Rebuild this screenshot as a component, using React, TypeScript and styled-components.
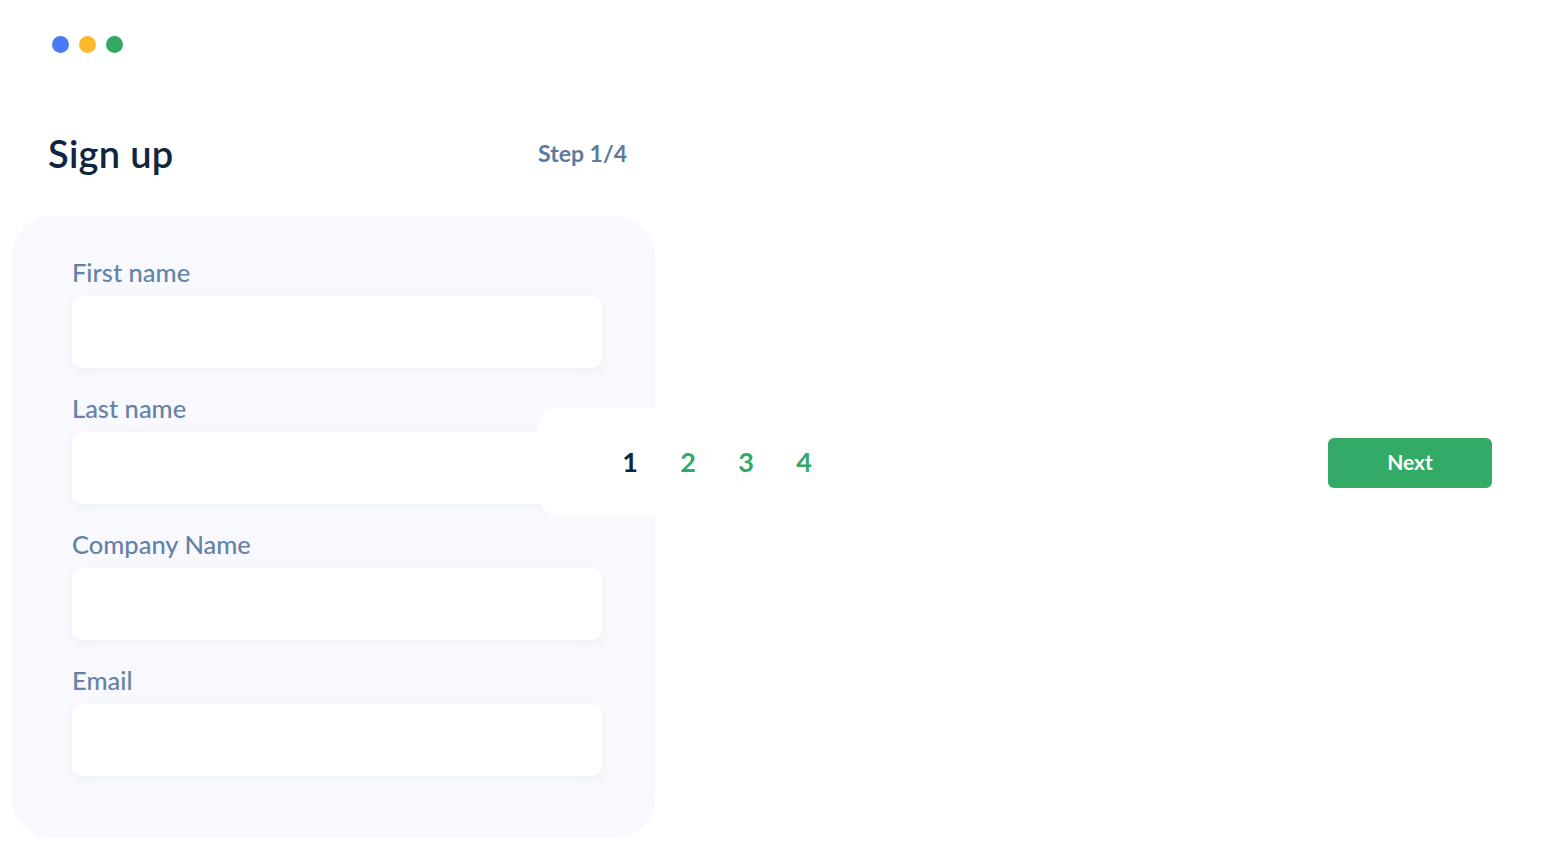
import React from 'react';
import styled, { createGlobalStyle } from 'styled-components';

const GlobalStyle = createGlobalStyle`
  html, body {
    margin: 0;
    padding: 0;
    background: #ffffff;
    font-family: Lato, 'Noto Sans', 'Liberation Sans', sans-serif;
  }
`;

const Page = styled.div`
  position: relative;
  width: 1544px;
  height: 850px;
  overflow: hidden;
  background: #ffffff;
`;

const Dots = styled.div`
  display: flex;
  gap: 10px;
  padding: 36px 0 0 52px;
`;

const Dot = styled.span<{ color: string }>`
  width: 17px;
  height: 17px;
  border-radius: 50%;
  background: ${({ color }) => color};
`;

const Header = styled.div`
  display: flex;
  align-items: center;
  justify-content: space-between;
  width: 579px;
  height: 60px;
  margin: 70px 0 0 48px;
`;

const Title = styled.h1`
  margin: 0;
  font-size: 38px;
  font-weight: 600;
  color: #0f2540;
  letter-spacing: 0.3px;
`;

const StepText = styled.span`
  font-size: 23px;
  font-weight: 700;
  color: #5b7b9e;
`;

const Card = styled.form`
  display: flex;
  flex-direction: column;
  gap: 26px;
  box-sizing: border-box;
  width: 643px;
  height: 622px;
  margin: 33px 0 0 12px;
  padding: 42px 53px 0 60px;
  border-radius: 40px;
  background: #f8f9fe;
`;

const Field = styled.div`
  display: flex;
  flex-direction: column;
  gap: 10px;
`;

const Label = styled.label`
  font-size: 25.5px;
  line-height: 28px;
  font-weight: 500;
  color: #6483a6;
`;

const Input = styled.input`
  box-sizing: border-box;
  width: 530px;
  height: 72px;
  border: none;
  border-radius: 10px;
  background: #ffffff;
  box-shadow: 0 3px 8px rgba(120, 135, 190, 0.08);
  outline: none;
  padding: 0 20px;
  font-family: inherit;
  font-size: 18px;
`;

const StepBar = styled.div`
  position: absolute;
  left: 538px;
  right: 0;
  top: 408px;
  height: 107px;
  display: flex;
  align-items: center;
  gap: 42px;
  padding: 0 52px 0 84px;
  box-sizing: border-box;
  background: #ffffff;
  border-radius: 20px 0 0 20px;
`;

const StepNumber = styled.span<{ active?: boolean }>`
  width: 16px;
  text-align: center;
  font-size: 27px;
  font-weight: 700;
  color: ${({ active }) => (active ? '#0e2541' : '#33a965')};
`;

const NextButton = styled.button`
  margin-left: auto;
  margin-top: 2px;
  width: 164px;
  height: 50px;
  border: none;
  border-radius: 6px;
  background: #33aa66;
  color: #ffffff;
  font-family: inherit;
  font-size: 21px;
  font-weight: 700;
  padding-bottom: 3px;
  cursor: pointer;
`;

const fields = ['First name', 'Last name', 'Company Name', 'Email'];

export default function App() {
  return (
    <Page>
      <GlobalStyle />
      <Dots>
        <Dot color="#4a7af5" />
        <Dot color="#fdb92c" />
        <Dot color="#33a965" />
      </Dots>
      <Header>
        <Title>Sign up</Title>
        <StepText>Step 1/4</StepText>
      </Header>
      <Card onSubmit={(e) => e.preventDefault()}>
        {fields.map((f) => (
          <Field key={f}>
            <Label>{f}</Label>
            <Input type="text" aria-label={f} />
          </Field>
        ))}
      </Card>
      <StepBar>
        <StepNumber active>1</StepNumber>
        <StepNumber>2</StepNumber>
        <StepNumber>3</StepNumber>
        <StepNumber>4</StepNumber>
        <NextButton type="button">Next</NextButton>
      </StepBar>
    </Page>
  );
}
